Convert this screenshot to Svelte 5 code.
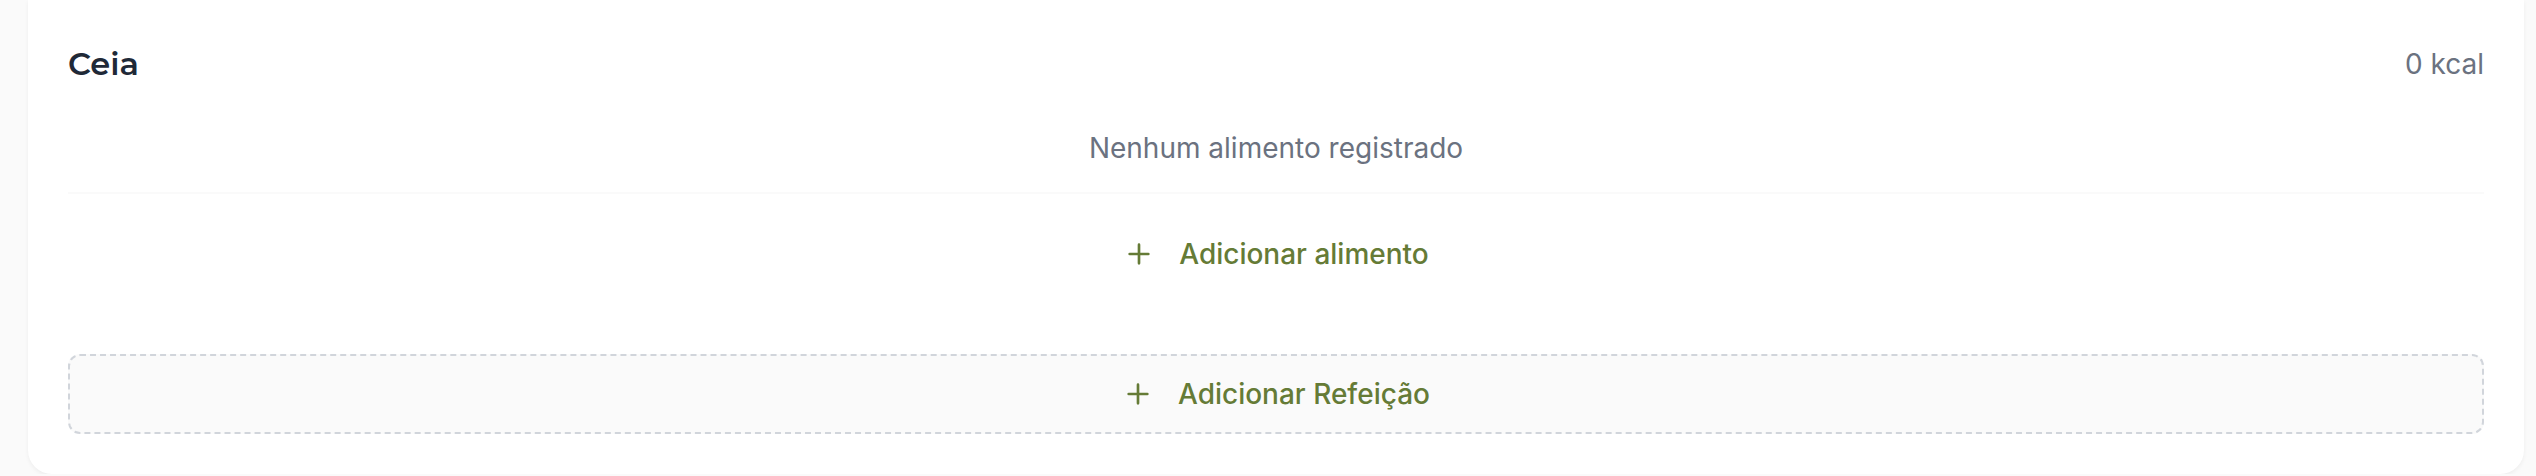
<script>
  let meal = $state({ name: 'Ceia', kcal: 0, foods: [] });
</script>

{#snippet plus()}
  <svg class="icon" viewBox="0 0 24 24" fill="none" stroke="currentColor" stroke-width="2" stroke-linecap="round" stroke-linejoin="round" aria-hidden="true">
    <path d="M12 5v14M5 12h14" />
  </svg>
{/snippet}

<main class="card">
  <section class="meal">
    <header>
      <h2>{meal.name}</h2>
      <span class="kcal">{meal.kcal} kcal</span>
    </header>
    {#if meal.foods.length === 0}
      <p class="empty">Nenhum alimento registrado</p>
    {/if}
    <button class="add food" type="button">
      {@render plus()}
      <span>Adicionar alimento</span>
    </button>
  </section>
  <button class="add new-meal" type="button">
    {@render plus()}
    <span>Adicionar Refeição</span>
  </button>
</main>

<style>
  :global(body) {
    background: #fafafa;
    font-family: Inter, sans-serif;
    -webkit-font-smoothing: antialiased;
  }
  .card {
    margin: 0 12px 0 28px;
    padding: 40px;
    background: #fff;
    border-radius: 0 0 24px 24px;
    box-shadow: 0 2px 4px rgba(0, 0, 0, 0.05);
    font-size: 28px;
    line-height: 40px;
    color: #6b7280;
  }
  header {
    display: flex;
    align-items: center;
    justify-content: space-between;
    line-height: 48px;
  }
  h2 {
    margin: 0;
    font-family: Montserrat, Inter, sans-serif;
    font-size: 32px;
    font-weight: 600;
    color: #1f2937;
  }
  .empty {
    margin: 16px 0 0;
    padding: 24px 0;
    border-bottom: 2px solid #fafafa;
    text-align: center;
  }
  .add {
    display: flex;
    align-items: center;
    justify-content: center;
    gap: 24px;
    box-sizing: border-box;
    width: 100%;
    border: 0;
    border-radius: 12px;
    background: none;
    color: #657b36;
    font: inherit;
    font-weight: 500;
    cursor: pointer;
  }
  .food {
    margin-top: 24px;
    padding: 16px 0;
  }
  .new-meal {
    margin-top: 64px;
    padding: 18px 0;
    border: 2px dashed #d1d5db;
    background: #fafafa;
  }
  .icon {
    width: 32px;
    height: 32px;
  }
</style>
